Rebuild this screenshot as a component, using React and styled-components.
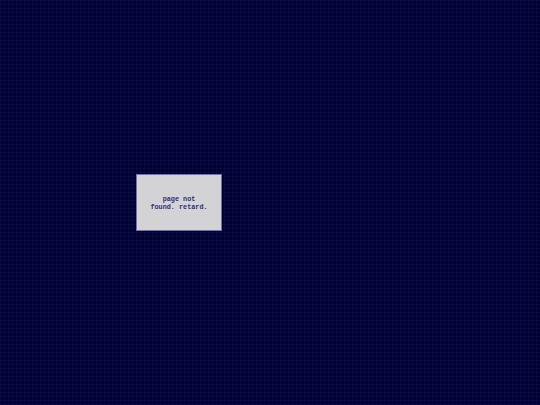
import styled, { createGlobalStyle } from 'styled-components';

const GlobalStyle = createGlobalStyle`
  html, body {
    margin: 0;
    padding: 0;
    height: 100%;
  }
  body {
    background-color: #000030;
    background-image:
      repeating-linear-gradient(0deg, rgba(30, 30, 120, 0.25) 0 1px, transparent 1px 4px),
      repeating-linear-gradient(90deg, rgba(30, 30, 120, 0.25) 0 1px, transparent 1px 4px);
  }
  #root {
    min-height: 100%;
  }
`;

const Page = styled.main`
  min-height: 405px;
  box-sizing: border-box;
  padding: 174px 0 0 136px;
`;

const NoticeBox = styled.div`
  width: 86px;
  height: 57px;
  box-sizing: border-box;
  display: flex;
  align-items: center;
  justify-content: center;
  background: #d3d3d6;
  border: 1px solid #7070c0;
  box-shadow: 1px 1px 0 #000020;
`;

const Message = styled.p`
  margin: 0;
  font-family: "Liberation Mono", "Courier New", monospace;
  font-weight: 700;
  font-size: 6.8px;
  line-height: 8px;
  text-align: center;
  color: #2e2e7c;
`;

export default function App() {
  return (
    <>
      <GlobalStyle />
      <Page>
        <NoticeBox>
          <Message>
            page not
            <br />
            found. retard.
          </Message>
        </NoticeBox>
      </Page>
    </>
  );
}
